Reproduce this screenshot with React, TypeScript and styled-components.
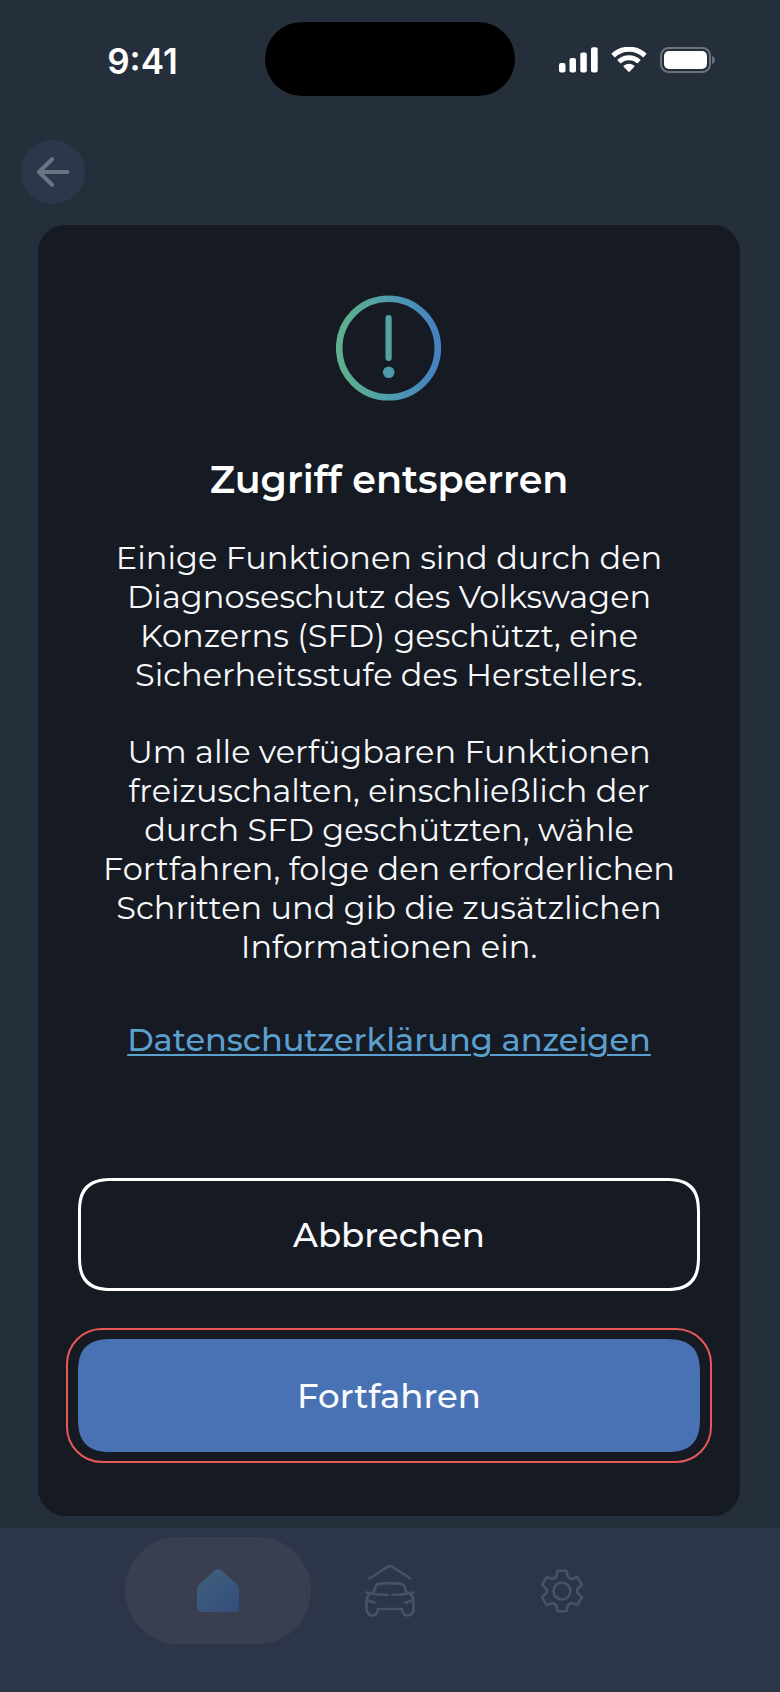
import React from "react";
import styled, { createGlobalStyle } from "styled-components";

const GlobalStyle = createGlobalStyle`
  *, *::before, *::after { box-sizing: border-box; }
  html, body, #root { margin: 0; min-height: 100vh; }
  body {
    background: #252e3b;
    color: #f7f8fa;
    font-family: Montserrat, Inter, "Open Sans", sans-serif;
  }
  h1, p { margin: 0; font: inherit; }
  button { font: inherit; color: inherit; border: 0; background: none; padding: 0; cursor: pointer; }
  svg { display: block; }
`;

const Screen = styled.div`
  min-height: 100vh;
  display: flex;
  flex-direction: column;
`;

const StatusBar = styled.header`
  display: grid;
  grid-template-columns: 1fr 250px 1fr;
  align-items: center;
  height: 118px;
  flex: none;
`;

const Clock = styled.time`
  justify-self: center;
  padding: 4px 0 0 20px;
  font-family: Inter, sans-serif;
  font-size: 35px;
  line-height: 40px;
  font-weight: 600;
  color: #fff;
`;

const Island = styled.div`
  height: 74px;
  border-radius: 37px;
  background: #000;
`;

const StatusIcons = styled.div`
  display: flex;
  align-items: center;
  justify-content: center;
  gap: 13px;
  padding: 2px 20px 0 0;
`;

const Toolbar = styled.div`
  padding: 22px 21px 21px;
`;

const BackButton = styled.button`
  display: grid;
  place-items: center;
  width: 64px;
  height: 64px;
  border-radius: 50%;
  background: #2c374b;
`;

const Card = styled.main`
  display: flex;
  flex-direction: column;
  align-items: center;
  margin: 0 40px 12px 38px;
  padding: 70px 40px 53px;
  border-radius: 27px;
  background: #161a23;
  text-align: center;
`;

const Title = styled.h1`
  margin-top: 55px;
  font-size: 38px;
  line-height: 48px;
  font-weight: 600;
  color: #fff;
`;

const Message = styled.p<{ $gap: number }>`
  margin-top: ${(p) => p.$gap}px;
  font-size: 32px;
  line-height: 39px;
  font-weight: 400;
  white-space: nowrap;
`;

const PolicyLink = styled.a`
  margin-top: 54px;
  font-size: 32px;
  line-height: 40px;
  font-weight: 500;
  color: #5b9fcf;
  text-decoration: underline;
  text-decoration-thickness: 2px;
  text-underline-offset: 3px;
`;

const Actions = styled.div`
  align-self: stretch;
  display: flex;
  flex-direction: column;
  gap: 37px;
  margin-top: 118px;
`;

const ActionButton = styled.button<{ $primary?: boolean }>`
  display: block;
  width: 100%;
  height: 113px;
  border-radius: 28px;
  font-size: 34px;
  line-height: 40px;
  font-weight: 500;
  color: #fafbfd;
  ${(p) => (p.$primary ? "background: #4972b5;" : "border: 3px solid #fff;")}
  @supports (corner-shape: squircle) {
    border-radius: 36px;
    corner-shape: superellipse(1.5);
  }
`;

const FocusRing = styled.div`
  margin: 0 -12px;
  padding: 9px 10px;
  border: 2px solid #e85858;
  border-radius: 36px;
`;

const TabBar = styled.nav`
  display: grid;
  grid-template-columns: repeat(3, minmax(0, 1fr));
  flex: 1 0 164px;
  padding: 9px 17% 0;
  background: #2d3648;
`;

const Tab = styled.button<{ $active?: boolean }>`
  display: grid;
  place-items: center;
  justify-self: center;
  width: 186px;
  height: 107px;
  border-radius: 54px;
  color: #465266;
  background: ${(p) => (p.$active ? "#393f50" : "transparent")};
`;

const SignalIcon = () => (
  <svg width="39" height="26" viewBox="0 0 39 26" fill="#fff" aria-hidden="true">
    <rect x="0" y="16" width="6.5" height="9.5" rx="2" />
    <rect x="10.5" y="11" width="6.5" height="14.5" rx="2" />
    <rect x="21.3" y="5.5" width="6.5" height="20" rx="2" />
    <rect x="32" y="0.3" width="6.7" height="25.2" rx="2" />
  </svg>
);

const WifiIcon = () => (
  <svg width="36" height="26" viewBox="0 0 36 26" aria-hidden="true">
    <g fill="none" stroke="#fff" strokeWidth="5">
      <path d="M2 8.6a23.2 23.2 0 0 1 32 0" />
      <path d="M7.9 14.8a14.6 14.6 0 0 1 20.2 0" />
    </g>
    <path d="M18 25.2l-5.3-5.4q-.6-.7.2-1.2a8.6 8.6 0 0 1 10.2 0q.8.5.2 1.2z" fill="#fff" />
  </svg>
);

const BatteryIcon = () => (
  <svg width="56" height="26" viewBox="0 0 56 26" aria-hidden="true">
    <rect x="1" y="1" width="49" height="24" rx="7.5" fill="none" stroke="#6c727d" strokeWidth="2" />
    <rect x="4" y="4" width="43" height="18" rx="5" fill="#fff" />
    <path d="M52 9q3 1.200 3 4t-3 4z" fill="#6c727d" />
  </svg>
);

const ArrowIcon = () => (
  <svg width="34" height="30" viewBox="0 0 34 30" fill="none" stroke="#697482" strokeWidth="4" strokeLinecap="round" strokeLinejoin="round" aria-hidden="true">
    <path d="M31.500 15H3M16 2.200L3 15l13 12.800" />
  </svg>
);

const AlertIcon = () => (
  <svg width="106" height="106" viewBox="0 0 106 106" role="img" aria-label="Hinweis">
    <defs>
      <linearGradient id="ring" x1="0" y1="0" x2="106" y2="0" gradientUnits="userSpaceOnUse">
        <stop offset="0" stopColor="#5fb08a" />
        <stop offset="0.150" stopColor="#5aac90" />
        <stop offset="0.500" stopColor="#4f9dad" />
        <stop offset="0.850" stopColor="#4787bf" />
        <stop offset="1" stopColor="#4680c2" />
      </linearGradient>
    </defs>
    <circle cx="52.500" cy="53" r="49.300" fill="none" stroke="url(#ring)" strokeWidth="6.600" />
    <rect x="49.500" y="20" width="6.200" height="46" rx="3" fill="#54a3a2" />
    <circle cx="52.700" cy="77.300" r="5.800" fill="#4f9aab" />
  </svg>
);

const HomeIcon = () => (
  <svg width="42" height="43" viewBox="0 0 42 43" aria-hidden="true">
    <defs>
      <linearGradient id="home" x1="0" y1="0" x2="1" y2="1">
        <stop offset="0.150" stopColor="#3f5e7b" />
        <stop offset="1" stopColor="#334d7c" />
      </linearGradient>
    </defs>
    <path d="M17.800 1.200q3.200-2.400 6.400 0L39.500 15q2.500 2.400 2.500 6v17q0 5-5 5H5q-5 0-5-5V21q0-3.600 2.500-6z" fill="url(#home)" />
  </svg>
);

const GarageIcon = () => (
  <svg width="50" height="53" viewBox="0 0 50 53" fill="none" stroke="currentColor" strokeWidth="2.600" strokeLinecap="round" strokeLinejoin="round" aria-hidden="true">
    <path d="M4.500 14.500L22.500 2.800q2.500-1.500 5 0L45.500 14.500" />
    <path d="M8.500 28l2.200-5.800q.9-2 3-2.300 11.300-1.500 22.600 0 2.100.3 3 2.300l2.200 5.800" />
    <path d="M1.500 28.500q10 2.500 21 2.200M48.500 28.500q-10 2.500-21 2.200" />
    <path d="M4 31q-2.500 2-2.500 6v7q0 7.500 6 7.500 5 0 5.500-6.500h24q.5 6.500 5.500 6.500 6 0 6-7.500v-7q0-4-2.500-6" />
    <path d="M3 36.500l6.500 2.200M47 36.500l-6.500 2.200" />
  </svg>
);

const GearIcon = () => (
  <svg width="44" height="44" viewBox="0 0 44 44" fill="none" stroke="currentColor" strokeWidth="2.600" strokeLinejoin="round" aria-hidden="true">
    <circle cx="22" cy="22" r="8.500" />
    <path d="M17.500 1.800h9l1.400 6.200 3.500 2 6.100-1.900 4.500 7.800-4.700 4.300v3.600l4.700 4.300-4.500 7.800-6.100-1.900-3.500 2-1.400 6.200h-9l-1.400-6.200-3.500-2-6.100 1.900L2 28.100l4.700-4.300v-3.600L2 15.900l4.500-7.800 6.100 1.900 3.500-2z" />
  </svg>
);

export default function App() {
  return (
    <>
      <GlobalStyle />
      <Screen>
        <StatusBar>
          <Clock>9:41</Clock>
          <Island />
          <StatusIcons>
            <SignalIcon />
            <WifiIcon />
            <BatteryIcon />
          </StatusIcons>
        </StatusBar>
        <Toolbar>
          <BackButton aria-label="Zurück">
            <ArrowIcon />
          </BackButton>
        </Toolbar>
        <Card>
          <AlertIcon />
          <Title>Zugriff entsperren</Title>
          <Message $gap={34}>
            Einige Funktionen sind durch den
            <br />
            Diagnoseschutz des Volkswagen
            <br />
            Konzerns (SFD) geschützt, eine
            <br />
            Sicherheitsstufe des Herstellers.
          </Message>
          <Message $gap={38}>
            Um alle verfügbaren Funktionen
            <br />
            freizuschalten, einschließlich der
            <br />
            durch SFD geschützten, wähle
            <br />
            Fortfahren, folge den erforderlichen
            <br />
            Schritten und gib die zusätzlichen
            <br />
            Informationen ein.
          </Message>
          <PolicyLink href="#datenschutz">Datenschutzerklärung anzeigen</PolicyLink>
          <Actions>
            <ActionButton>Abbrechen</ActionButton>
            <FocusRing>
              <ActionButton $primary>Fortfahren</ActionButton>
            </FocusRing>
          </Actions>
        </Card>
        <TabBar aria-label="Hauptnavigation">
          <Tab $active aria-label="Start">
            <HomeIcon />
          </Tab>
          <Tab aria-label="Garage">
            <GarageIcon />
          </Tab>
          <Tab aria-label="Einstellungen">
            <GearIcon />
          </Tab>
        </TabBar>
      </Screen>
    </>
  );
}
